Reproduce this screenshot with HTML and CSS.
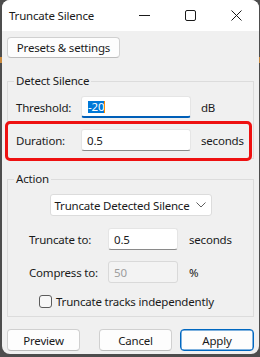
FILE: index.html
```html
<!DOCTYPE html>
<html lang="en">
<head>
    <meta charset="UTF-8">
    <meta name="viewport" content="width=device-width, initial-scale=1.0">
    <title>Truncate Silence</title>
    <link rel="stylesheet" href="styles.css">
</head>
<body>
    <div class="window">
        <div class="titlebar">
            <span class="title">Truncate Silence</span>
            <div class="controls">
                <span class="ctl">
                    <svg width="11" height="11" viewBox="0 0 11 11"><path d="M0 5.5H11" stroke="#1a1a1a" stroke-width="1"/></svg>
                </span>
                <span class="ctl">
                    <svg width="11" height="11" viewBox="0 0 11 11"><rect x="0.5" y="0.5" width="10" height="10" rx="1.5" fill="none" stroke="#1a1a1a" stroke-width="1"/></svg>
                </span>
                <span class="ctl">
                    <svg width="11" height="11" viewBox="0 0 11 11"><path d="M0.5 0.5L10.5 10.5M10.5 0.5L0.5 10.5" stroke="#1a1a1a" stroke-width="1"/></svg>
                </span>
            </div>
        </div>

        <div class="content">
            <button class="btn presets">Presets &amp; settings</button>

            <fieldset class="group detect">
                <legend>Detect Silence</legend>
                <div class="row">
                    <span class="lbl">Threshold:</span>
                    <div class="field wide focused"><span class="sel">-20</span><span class="caret"></span></div>
                    <span class="unit">dB</span>
                </div>
                <div class="row marked">
                    <span class="lbl">Duration:</span>
                    <div class="field wide">0.5</div>
                    <span class="unit">seconds</span>
                </div>
            </fieldset>

            <fieldset class="group action">
                <legend>Action</legend>
                <div class="select">
                    <span>Truncate Detected Silence</span>
                    <svg width="10" height="6" viewBox="0 0 10 6"><path d="M0.5 0.5L5 5L9.5 0.5" fill="none" stroke="#5f5f5f" stroke-width="1"/></svg>
                </div>
                <div class="row sub">
                    <span class="lbl">Truncate to:</span>
                    <div class="field short">0.5</div>
                    <span class="unit">seconds</span>
                </div>
                <div class="row sub second">
                    <span class="lbl">Compress to:</span>
                    <div class="field short disabled">50</div>
                    <span class="unit">%</span>
                </div>
                <div class="check">
                    <span class="box"></span>
                    <span>Truncate tracks independently</span>
                </div>
            </fieldset>

            <div class="buttons">
                <button class="btn">Preview</button>
                <button class="btn cancel">Cancel</button>
                <button class="btn apply">Apply</button>
            </div>
        </div>
    </div>
</body>
</html>
```

FILE: styles.css
```css
body {
    margin: 0;
    padding: 0 1px 3px 2px;
    background: linear-gradient(to bottom, #4d4d4d 57px, #c98a3e 57px, #c98a3e 63px, #4d4d4d 63px);
    font-family: 'Noto Sans', sans-serif;
    font-size: 11.5px;
    letter-spacing: -0.2px;
    color: #1a1a1a;
}

.window {
    height: 354px;
    background-color: #f0f0f0;
    border-radius: 8px;
    overflow: hidden;
    display: flex;
    flex-direction: column;
}

.titlebar {
    height: 31px;
    flex-shrink: 0;
    background-color: #fff;
    display: flex;
    align-items: center;
    justify-content: space-between;
}
.title {
    padding-left: 7px;
    line-height: 16px;
}
.controls {
    display: flex;
    height: 100%;
}
.ctl {
    width: 46px;
    display: flex;
    align-items: center;
    justify-content: center;
}

.content {
    padding: 6px 5px 0 5px;
    display: flex;
    flex-direction: column;
}

.btn {
    font-family: inherit;
    font-size: inherit;
    letter-spacing: inherit;
    color: #1a1a1a;
    height: 22px;
    padding: 0;
    background-color: #fdfdfd;
    border: 1px solid #d0d0d0;
    border-bottom-color: #bcbcbc;
    border-radius: 4px;
}
.presets {
    width: 113px;
    height: 21px;
    align-self: flex-start;
}

.group {
    margin: 15px 0 0;
    padding: 7px 8px 0 8px;
    border: 1px solid #dcdcdc;
    min-width: 0;
}
.group legend {
    margin-left: -2px;
    padding: 0 2px;
    line-height: 16px;
}
.detect .marked {
    margin: 3px -7px -3px -11px;
    padding: 5px 0 7px 8px;
    border: 3px solid #ee1111;
    border-radius: 5px;
}
.action {
    margin-top: 12px;
    padding-bottom: 6px;
}

.row {
    display: flex;
    align-items: center;
    white-space: nowrap;
}
.lbl {
    width: 65px;
    flex-shrink: 0;
}
.unit {
    margin-left: 10px;
}

.field {
    height: 22px;
    flex-shrink: 0;
    box-sizing: border-box;
    padding: 0 5px;
    background-color: #fff;
    border: 1px solid #e5e5e5;
    border-bottom-color: #8a8a8a;
    border-radius: 3px;
    display: flex;
    align-items: center;
}
.wide {
    width: 110px;
}
.short {
    width: 70px;
}
.focused {
    padding-left: 6px;
    border-bottom: 2px solid #005fb8;
}
.sel {
    background-color: #0078d7;
    color: #fff;
    line-height: 12px;
}
.caret {
    width: 1px;
    height: 12px;
    background-color: #ff8c00;
}
.disabled {
    background-color: #f3f3f3;
    border-color: #d9d9d9;
    color: #9d9d9d;
}

.select {
    width: 162px;
    height: 22px;
    box-sizing: border-box;
    margin: 0 auto;
    padding: 0 5px 0 4px;
    background-color: #fff;
    border: 1px solid #dcdcdc;
    border-radius: 3px;
    display: flex;
    align-items: center;
    justify-content: space-between;
    white-space: nowrap;
}

.sub {
    margin-top: 12px;
    padding-left: 13px;
}
.sub .lbl {
    width: 79px;
}
.sub .unit {
    margin-left: 11px;
}
.sub.second {
    margin-top: 11px;
}

.check {
    margin-top: 9px;
    height: 18px;
    padding-left: 23px;
    display: flex;
    align-items: center;
    gap: 4px;
    white-space: nowrap;
}
.box {
    width: 13px;
    height: 13px;
    flex-shrink: 0;
    box-sizing: border-box;
    border: 1px solid #5c5c5c;
    border-radius: 3px;
    background-color: #f7f7f7;
}

.buttons {
    margin-top: 12px;
    display: flex;
}
.buttons .btn {
    width: 73px;
}
.buttons .cancel {
    margin-left: 19px;
}
.buttons .apply {
    width: 74px;
    margin-left: 8px;
    border: 1px solid #0067c0;
    box-shadow: inset 0 0 0 0.5px #0067c0;
}
```
